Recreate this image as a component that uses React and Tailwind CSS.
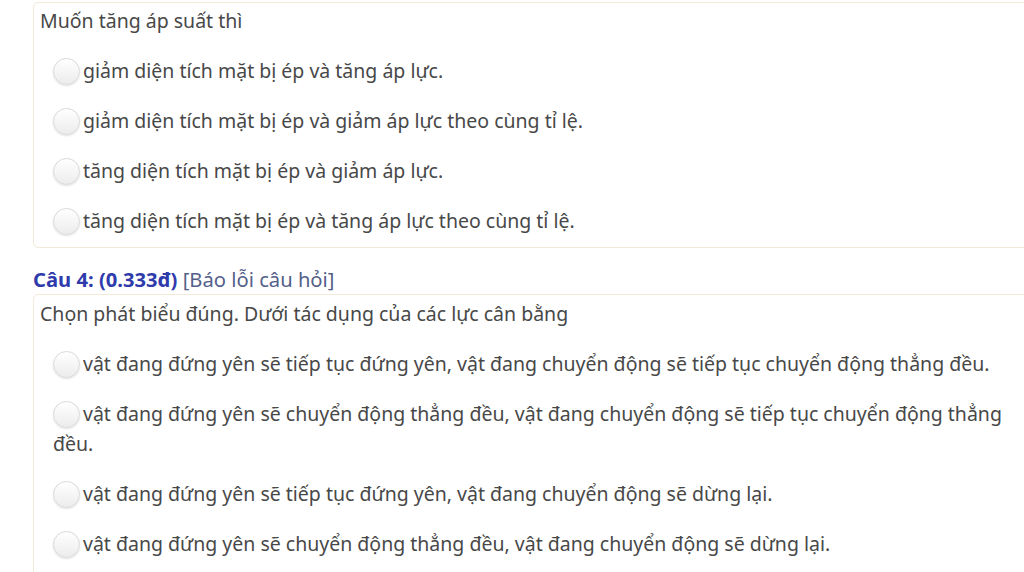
import React from "react";

const font = { fontFamily: "'Noto Sans', 'Open Sans', sans-serif" };

function Radio() {
  return (
    <span className="inline-block align-[-7px] w-[27px] h-[27px] rounded-full border border-[#d9d9d9] bg-gradient-to-b from-white to-[#ececec] shadow-[0_1px_2px_rgba(0,0,0,0.12)] mr-[3px]" />
  );
}

function Option({ children }) {
  return (
    <div className="mt-[20px] pl-[13px] leading-[30px]">
      <Radio />
      {children}
    </div>
  );
}

export default function App() {
  const q1 = [
    "giảm diện tích mặt bị ép và tăng áp lực.",
    "giảm diện tích mặt bị ép và giảm áp lực theo cùng tỉ lệ.",
    "tăng diện tích mặt bị ép và giảm áp lực.",
    "tăng diện tích mặt bị ép và tăng áp lực theo cùng tỉ lệ.",
  ];
  const q2 = [
    "vật đang đứng yên sẽ tiếp tục đứng yên, vật đang chuyển động sẽ tiếp tục chuyển động thẳng đều.",
    "vật đang đứng yên sẽ chuyển động thẳng đều, vật đang chuyển động sẽ tiếp tục chuyển động thẳng đều.",
    "vật đang đứng yên sẽ tiếp tục đứng yên, vật đang chuyển động sẽ dừng lại.",
    "vật đang đứng yên sẽ chuyển động thẳng đều, vật đang chuyển động sẽ dừng lại.",
  ];
  return (
    <div className="w-[1024px] h-[572px] overflow-hidden bg-white text-[19.5px] text-[#484848]" style={font}>
      <div className="ml-[33px] w-[1030px] pt-[2px]">
        <div className="border border-[#f3e9d8] rounded-[5px] pl-[6px] pr-[42px] pt-[3px] pb-[11px]">
          <div className="leading-[30px]">Muốn tăng áp suất thì</div>
          {q1.map((t) => (
            <Option key={t}>{t}</Option>
          ))}
        </div>
        <div className="mt-[16px] leading-[30px] text-[20.2px]">
          <span className="font-bold text-[#2f3bab]">Câu 4: (0.333đ)</span>{" "}
          <span className="text-[#55608a]">[Báo lỗi câu hỏi]</span>
        </div>
        <div className="border border-[#f3e9d8] rounded-[5px] pl-[6px] pr-[42px] pt-[4px] pb-[20px]">
          <div className="leading-[30px]">Chọn phát biểu đúng. Dưới tác dụng của các lực cân bằng</div>
          {q2.map((t) => (
            <Option key={t}>{t}</Option>
          ))}
        </div>
      </div>
    </div>
  );
}
